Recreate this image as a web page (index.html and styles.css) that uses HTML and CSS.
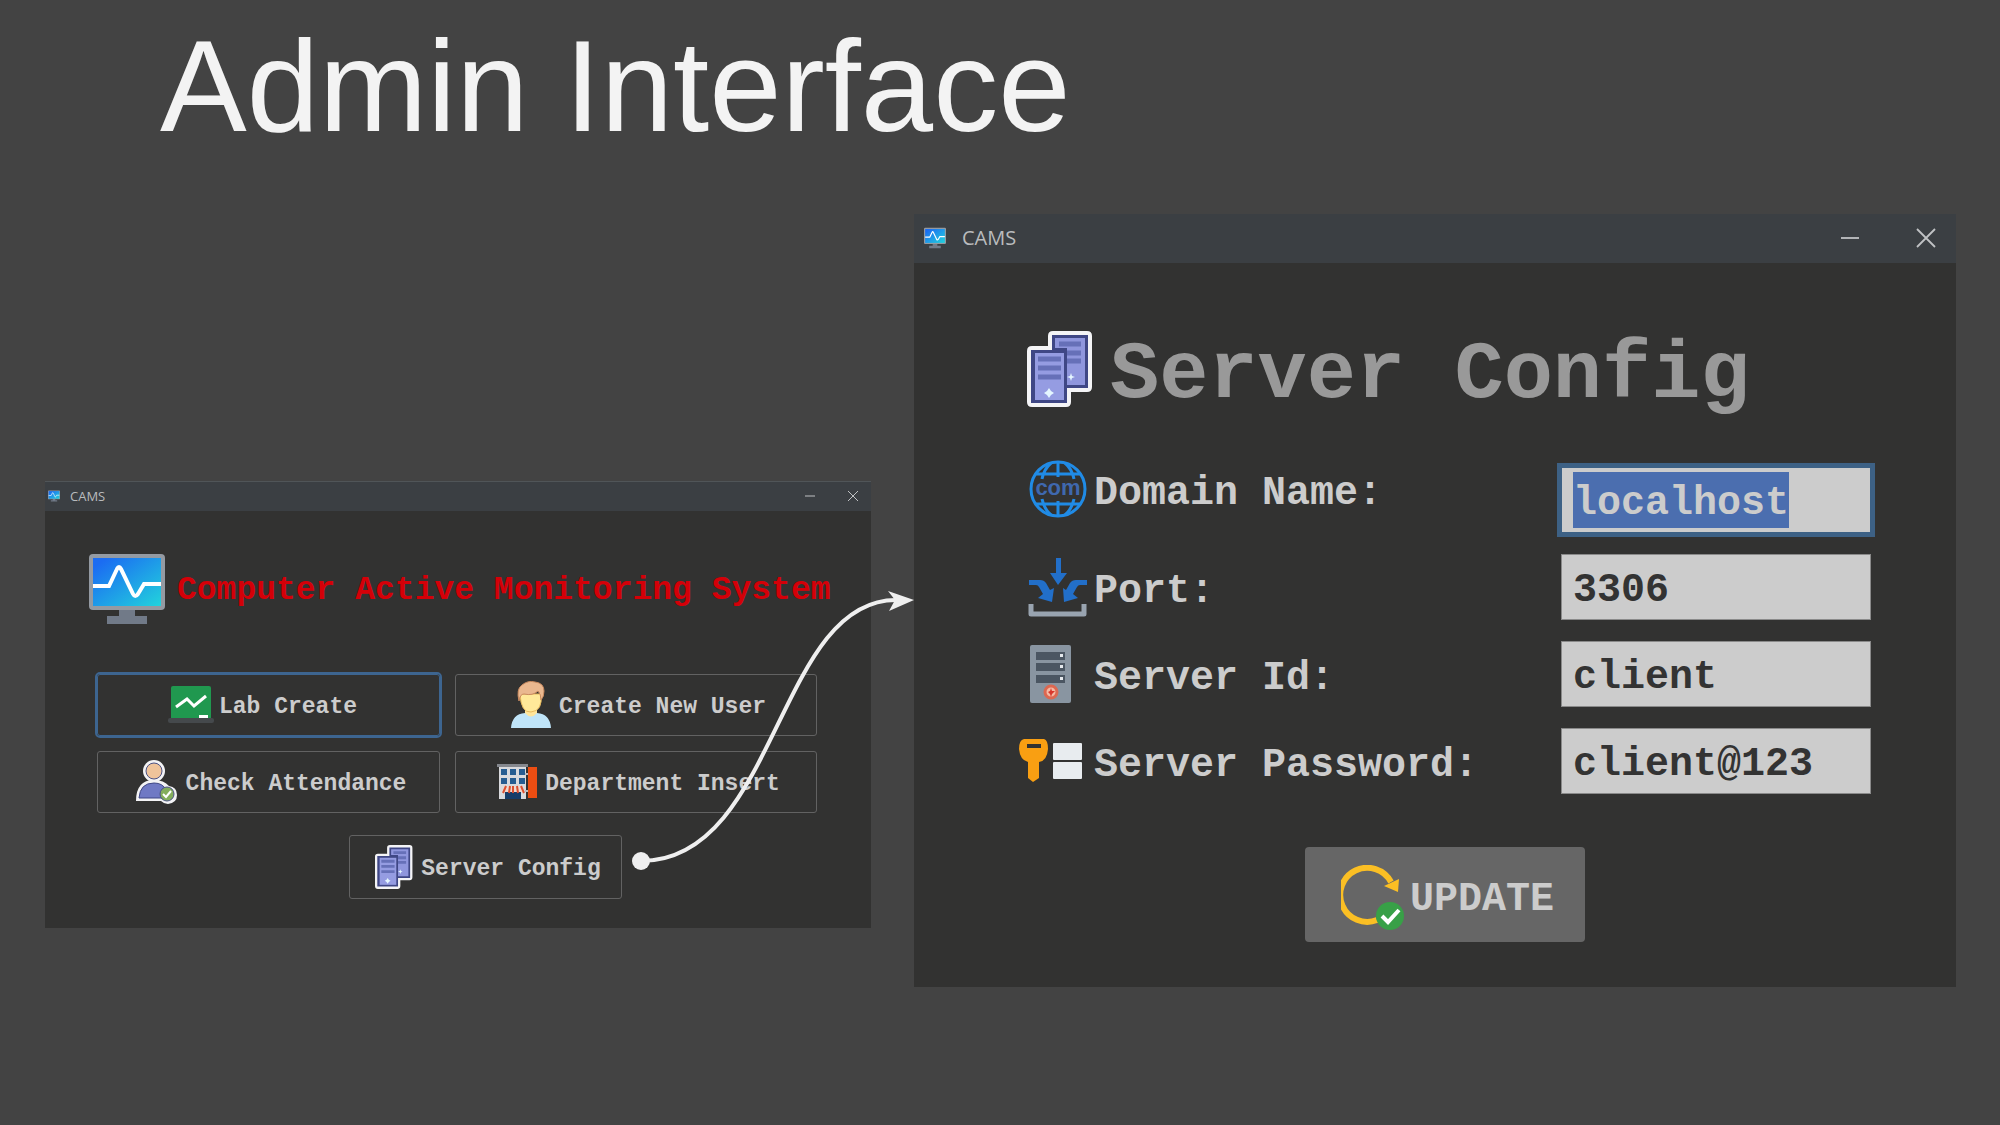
FILE: index.html
```html
<!DOCTYPE html>
<html lang="en">
<head>
<meta charset="utf-8">
<title>Admin Interface</title>
<link rel="stylesheet" href="styles.css">
</head>
<body>
<svg class="defs" aria-hidden="true">
  <defs>
    <linearGradient id="screen" x1="0" y1="0" x2="1" y2="1">
      <stop offset="0.1" stop-color="#1b6cf2"/>
      <stop offset="1" stop-color="#22d3dc"/>
    </linearGradient>
    <symbol id="monitor" viewBox="0 0 76 70">
      <path fill="#717a88" d="M30 54h16v8h12v8H18v-8h12z"/>
      <rect width="76" height="56" rx="4" fill="#949aa2"/>
      <rect x="4" y="4" width="68" height="48" fill="url(#screen)"/>
      <path d="M4 32h16l8-17q2-4 4 0l12 25q2 4 5 0l6-10h17" fill="none" stroke="#fff" stroke-width="4"/>
    </symbol>
    <symbol id="servers" viewBox="0 0 66 76">
      <path fill="#f4f4f6" d="M26 0h34q5 0 5 5v51q0 5-5 5H44v10q0 5-5 5H5q-5 0-5-5V20q0-5 5-5h16V5q0-5 5-5z"/>
      <path fill="#3f4785" d="M25 4h36v53H40v15H4V19h21z"/>
      <path fill="#8f96dd" d="M28 7h30v47H40V17H28z"/>
      <path fill="#959ce2" d="M8 22h29v47H8z"/>
      <path stroke="#6670b8" stroke-width="5" d="M32 13h22M40 22h14M40 30h14M11 28h23M11 37h23M11 46h23"/>
      <path fill="#e4f6ff" d="M22 57l2 3 3 2-3 2-2 3-2-3-3-2 3-2zM44 42l1 3 3 1-3 1-1 3-1-3-3-1 3-1z"/>
    </symbol>
  </defs>
</svg>

<header class="slide-header"><h1 class="slide-title">Admin Interface</h1></header>

<main class="stage">
  <section class="window window--menu">
    <div class="titlebar">
      <svg class="titlebar__icon" aria-hidden="true"><use href="#monitor"/></svg>
      <span class="titlebar__name">CAMS</span>
      <button class="titlebar__button" aria-label="Minimize"><svg viewBox="0 0 10 10"><path d="M0 5h10"/></svg></button>
      <button class="titlebar__button" aria-label="Close"><svg viewBox="0 0 10 10"><path d="M0 0l10 10M10 0L0 10"/></svg></button>
    </div>
    <div class="menu">
      <div class="brand">
        <svg class="brand__logo" aria-hidden="true"><use href="#monitor"/></svg>
        <h2 class="brand__name">Computer Active Monitoring System</h2>
      </div>
      <div class="menu__grid">
        <button class="action action--focused">
          <svg width="46" height="38" viewBox="0 0 46 38" aria-hidden="true">
            <rect y="32" width="46" height="5" rx="2" fill="#45494c"/>
            <path fill="#20984f" d="M5 0h36q2 0 2 2v30H3V2q0-2 2-2z"/>
            <path d="M8 21l11-8 7 7L38 10" fill="none" stroke="#fff" stroke-width="3"/>
            <path fill="#fff" d="M31 29h9v3h-9z"/>
          </svg>
          <span>Lab Create</span>
        </button>
        <button class="action">
          <svg width="40" height="48" viewBox="0 0 40 48" aria-hidden="true">
            <path fill="#ffe59a" d="M14 29h12v8q-6 6-12 0z"/>
            <path fill="#bfe4f8" d="M0 47q1-14 14-15 6 7 12 0 13 1 14 15z"/>
            <path fill="#ffe999" stroke="#e8b95c" d="M9 13h21q2 17-10 18Q10 32 9 13z"/>
            <path fill="#eab88f" stroke="#c98a5f" d="M8 20Q5 8 11 4q6-5 13-3 9 1 9 9 0 6-3 9 0-6-3-9-5 5-14 3-4 0-5 7z"/>
          </svg>
          <span>Create New User</span>
        </button>
        <button class="action">
          <svg width="42" height="44" viewBox="0 0 42 44" aria-hidden="true">
            <g fill="#f3f3f5">
              <circle cx="18" cy="11" r="11"/>
              <path d="M0 41q0-21 18-21 10 0 15 6 8 1 8 9 0 8-9 9-4 0-7-3z"/>
            </g>
            <circle cx="18" cy="11" r="8" fill="#efc49b" stroke="#4b5285" stroke-width="1"/>
            <path fill="#6f79c4" stroke="#3f4785" d="M3 38q1-15 15-15 9 0 12 7-5 3-4 8z"/>
            <circle cx="31" cy="34" r="7" fill="#83ad5c" stroke="#4b5285"/>
            <path d="M27 34l3 3 5-6" fill="none" stroke="#fff" stroke-width="2"/>
          </svg>
          <span>Check Attendance</span>
        </button>
        <button class="action">
          <svg width="40" height="36" viewBox="0 0 40 36" aria-hidden="true">
            <path fill="#d9dadd" d="M2 1h27v34H2z"/>
            <path fill="#85888e" d="M0 0h31v3H0z"/>
            <path fill="#265d91" d="M4 5h6v6H4zM13 5h6v6h-6zM22 5h6v6h-6zM4 14h6v6H4zM13 14h6v6h-6zM22 14h6v6h-6z"/>
            <path fill="#163d69" d="M8 28h16v7H8z"/>
            <path fill="#f0d9cf" d="M7 22h18l2 6H5z"/>
            <path d="M9 22l-3 7M13 22l-1 7M16 22v7M20 22l1 7M24 22l3 7" stroke="#dc502f" stroke-width="2"/>
            <path d="M28 10h4M28 27h4" stroke="#b8bbc0" stroke-width="2"/>
            <path fill="#ec4d12" d="M31 3h9v31h-9z"/>
          </svg>
          <span>Department Insert</span>
        </button>
      </div>
      <button class="action action--server">
        <svg width="38" height="44" aria-hidden="true"><use href="#servers"/></svg>
        <span>Server Config</span>
      </button>
    </div>
  </section>

  <section class="window window--config">
    <svg class="connector" viewBox="0 0 290 290" aria-hidden="true">
      <path d="M17 275C153 275 153 14 272 14" fill="none" stroke="#efefef" stroke-width="4"/>
      <circle cx="17" cy="275" r="9" fill="#efefef"/>
      <path fill="#efefef" d="M290 14l-26-9 7 9-6 11z"/>
    </svg>
    <div class="titlebar titlebar--large">
      <svg class="titlebar__icon" aria-hidden="true"><use href="#monitor"/></svg>
      <span class="titlebar__name">CAMS</span>
      <button class="titlebar__button" aria-label="Minimize"><svg viewBox="0 0 10 10"><path d="M0 5h10"/></svg></button>
      <button class="titlebar__button" aria-label="Close"><svg viewBox="0 0 10 10"><path d="M0 0l10 10M10 0L0 10"/></svg></button>
    </div>
    <form class="config">
      <div class="config__heading">
        <svg width="66" height="76" aria-hidden="true"><use href="#servers"/></svg>
        <h2 class="config__title">Server Config</h2>
      </div>
      <div class="fields">
        <label class="field-label field-label--top" for="domain">
          <svg class="field-icon" viewBox="0 0 66 58" aria-hidden="true">
            <g fill="none" stroke="#208be6" stroke-width="3">
              <circle cx="40" cy="29" r="27"/>
              <path d="M17 14h46M17 44h46M40 2v15M40 41v15M33 3q-7 6-9 16M47 3q7 6 9 16M33 55q-7-6-9-16M47 55q7-6 9-16"/>
            </g>
            <text class="globe-text" x="40" y="35" text-anchor="middle">com</text>
          </svg>
          <span>Domain Name:</span>
        </label>
        <input class="field-input field-input--focused" id="domain" value="localhost" autofocus>

        <label class="field-label" for="port">
          <svg class="field-icon" viewBox="0 0 66 58" aria-hidden="true">
            <path d="M13 46v10h53V46" fill="none" stroke="#99a4b0" stroke-width="5" stroke-linejoin="round"/>
            <g fill="#226fc9">
              <path d="M38 0h5v15h6l-9 12-8-12h6z"/>
              <path d="M11 22h11q4 0 6 3l4 7 4-2-2 14-14-4 5-4-4-7q-1-2-3-2h-7z"/>
              <path d="M69 22H58q-4 0-6 3l-4 7-3-2 1 14 14-4-5-4 4-7q1-2 3-2h7z"/>
            </g>
          </svg>
          <span>Port:</span>
        </label>
        <input class="field-input" id="port" value="3306">

        <label class="field-label" for="server-id">
          <svg class="field-icon" viewBox="0 0 66 58" aria-hidden="true">
            <rect x="12" width="41" height="58" rx="2" fill="#8995a1"/>
            <path fill="#4b5662" d="M18 7h29v8H18zM18 18h29v8H18zM18 30h29v8H18z"/>
            <path fill="#e5e9ed" d="M42 9h3v3h-3zM42 20h3v3h-3zM42 32h3v3h-3z"/>
            <circle cx="33" cy="47" r="6" fill="#f4b9a4" stroke="#dc6851" stroke-width="3"/>
            <path fill="#d9362b" d="M33 43l1 3h3l-3 3-1 3-1-3-2-2 2-1z"/>
          </svg>
          <span>Server Id:</span>
        </label>
        <input class="field-input" id="server-id" value="client">

        <label class="field-label" for="server-password">
          <svg class="field-icon" viewBox="0 0 66 58" aria-hidden="true">
            <path fill="#f99f12" fill-rule="evenodd" d="M6 7h20q4 1 4 10-1 12-9 13v16l-6 4-5-4V30Q2 28 1 17q0-9 5-10zM9 12v4h14v-4z"/>
            <rect x="35" y="11" width="29" height="17" rx="1" fill="#e8ecef"/>
            <rect x="35" y="30" width="29" height="17" rx="1" fill="#e8ecef"/>
          </svg>
          <span>Server Password:</span>
        </label>
        <input class="field-input" id="server-password" value="client@123">
      </div>
      <button class="update" type="button">
        <svg width="64" height="66" viewBox="0 0 64 66" aria-hidden="true">
          <path d="M36 55A27 27 0 1 1 50 17" fill="none" stroke="#fbbf24" stroke-width="6"/>
          <path fill="#fbbf24" d="M43 21l15-7-1 13z"/>
          <circle cx="49" cy="51" r="14" fill="#38a047"/>
          <path d="M41 51l6 6 11-12" fill="none" stroke="#fff" stroke-width="4"/>
        </svg>
        <span>UPDATE</span>
      </button>
    </form>
  </section>
</main>
<script src="main.js"></script>
</body>
</html>
```
FILE: styles.css
```css
* { box-sizing: border-box; }

body {
  margin: 0;
  min-height: 100vh;
  background: #434343;
  color: #cccccc;
  font-family: "Liberation Mono", "Courier New", monospace;
  font-weight: 700;
}

h1, h2 { margin: 0; }

button, input { font: inherit; color: inherit; }

svg { flex: none; }

.defs { display: block; width: 0; height: 0; }

.slide-header { padding: 11px 160px 53px; }

.slide-title {
  color: #f3f3f3;
  font: 400 130px/150px "Liberation Sans", Arial, sans-serif;
}

.stage {
  display: grid;
  grid-template-columns: 826fr 1042fr;
  gap: 43px;
  align-items: end;
  padding: 0 44px 48px 45px;
}

.window { position: relative; background: #323231; }

.window--menu { margin-bottom: 59px; }

/* Title bars */
.titlebar {
  display: flex;
  align-items: center;
  gap: 33px;
  height: 30px;
  padding: 0 13px 2px 3px;
  border-top: 1px solid #505558;
  background: #3b3f43;
  color: #b9bbbd;
  font: 400 13px/20px "Open Sans", "Noto Sans", sans-serif;
}

.titlebar__icon { width: 12px; height: 12px; }

.titlebar__name { flex: 1; margin-left: -23px; }

.titlebar__button {
  display: flex;
  padding: 0;
  border: 0;
  background: none;
}

.titlebar__button svg {
  width: 10px;
  height: 10px;
  overflow: visible;
  stroke: #c0c2c4;
  stroke-width: 1;
}

.titlebar--large {
  gap: 58px;
  height: 49px;
  padding: 0 21px 2px 10px;
  border-top: 0;
  font-size: 20px;
}

.titlebar--large .titlebar__icon { width: 22px; height: 22px; }

.titlebar--large .titlebar__name { margin-left: -42px; }

.titlebar--large svg { width: 18px; height: 18px; }

/* Main menu */
.menu {
  display: flex;
  flex-direction: column;
  padding: 43px 54px 29px 52px;
}

.brand {
  display: flex;
  gap: 12px;
  margin: 0 -54px 46px -8px;
}

.brand__logo { width: 76px; height: 70px; }

.brand__name {
  color: #d40008;
  font-size: 33px;
  line-height: 74px;
  white-space: nowrap;
}

.menu__grid {
  display: grid;
  grid-template-columns: 343fr 362fr;
  gap: 15px;
}

.action {
  display: flex;
  align-items: center;
  justify-content: center;
  gap: 8px;
  height: 62px;
  padding: 0 0 0 5px;
  border: 1px solid #626262;
  border-radius: 3px;
  background: none;
  font-size: 23px;
  white-space: nowrap;
}

.action span { padding-top: 4px; }

.action--focused {
  gap: 5px;
  padding: 0 12px 0 0;
  border-color: #3d6590;
  outline: 2px solid #3d6590;
}

.action--server {
  width: 273px;
  height: 64px;
  margin: 22px 0 0 252px;
}

/* Server settings */
.config {
  display: flex;
  flex-direction: column;
  padding: 68px 85px 45px 104px;
}

.config__heading {
  display: flex;
  gap: 17px;
  padding-left: 9px;
  margin-bottom: 46px;
}

.config__title {
  color: #999999;
  font-size: 82px;
  line-height: 90px;
  white-space: nowrap;
}

.fields {
  display: grid;
  grid-template-columns: 1fr 310px;
  align-items: center;
  row-gap: 21px;
  font-size: 40px;
}

.field-label {
  display: flex;
  align-items: center;
  gap: 10px;
  line-height: 44px;
  white-space: nowrap;
}

.field-label span { padding-top: 10px; }

.field-label--top { align-self: start; margin-top: -5px; }

.field-icon {
  width: 66px;
  height: 58px;
  margin: -7px 0;
  overflow: visible;
}

.globe-text {
  fill: #3f68ae;
  font: 700 22px "Liberation Sans", Arial, sans-serif;
}

.field-input {
  width: 100%;
  height: 66px;
  padding: 6px 11px 0;
  border: 1px solid #8a8a8a;
  border-radius: 0;
  outline: 0;
  background: #cccccc;
  color: #333333;
  line-height: 56px;
}

/* The selected text sits on a band taller than its line */
.field-input--focused {
  border-color: #3d6185;
  outline: 4px solid #3d6185;
}

.field-input--focused:focus {
  background: linear-gradient(#4b6eaf, #4b6eaf) 11px 4px / 9ch 56px no-repeat #cccccc;
}

.field-input::selection {
  background: rgba(75, 110, 175, 0.99);
  color: #cccccc;
}

.update {
  display: flex;
  align-items: center;
  justify-content: center;
  gap: 5px;
  align-self: center;
  width: 280px;
  height: 95px;
  margin-top: 53px;
  padding: 6px 0 0 6px;
  border: 0;
  border-radius: 4px;
  background: #666666;
  font-size: 40px;
}

.update span { padding-top: 4px; }

/* Arrow from the menu entry to the window it opens */
.connector {
  position: absolute;
  top: 372px;
  right: 100%;
  width: 290px;
  height: 290px;
  overflow: visible;
  pointer-events: none;
}
```
FILE: main.js
```js
document.getElementById("domain").select();
```
